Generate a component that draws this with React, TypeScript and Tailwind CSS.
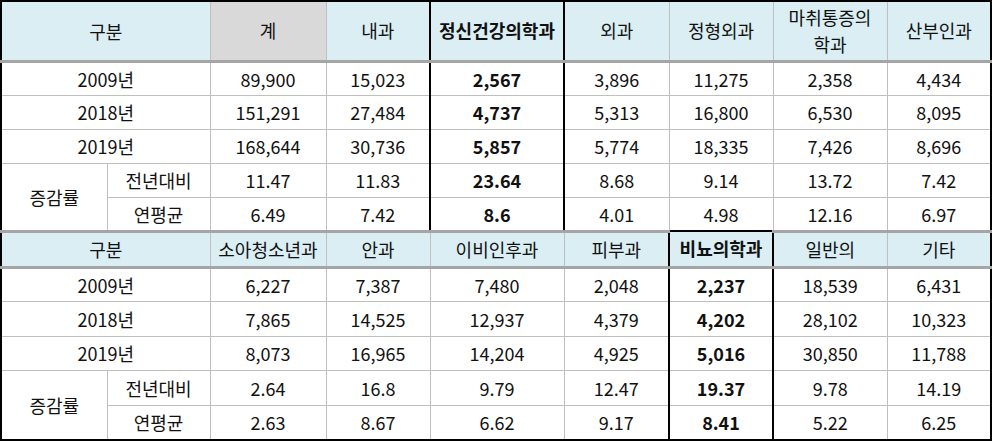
import React from "react";

const font = { fontFamily: '"Noto Sans CJK KR", "Noto Sans", sans-serif' };

type Cell = string;
const top1 = ["계", "내과", "정신건강의학과", "외과", "정형외과", "마취통증의\n학과", "산부인과"];
const rows1: Cell[][] = [
  ["89,900", "15,023", "2,567", "3,896", "11,275", "2,358", "4,434"],
  ["151,291", "27,484", "4,737", "5,313", "16,800", "6,530", "8,095"],
  ["168,644", "30,736", "5,857", "5,774", "18,335", "7,426", "8,696"],
  ["11.47", "11.83", "23.64", "8.68", "9.14", "13.72", "7.42"],
  ["6.49", "7.42", "8.6", "4.01", "4.98", "12.16", "6.97"],
];
const top2 = ["소아청소년과", "안과", "이비인후과", "피부과", "비뇨의학과", "일반의", "기타"];
const rows2: Cell[][] = [
  ["6,227", "7,387", "7,480", "2,048", "2,237", "18,539", "6,431"],
  ["7,865", "14,525", "12,937", "4,379", "4,202", "28,102", "10,323"],
  ["8,073", "16,965", "14,204", "4,925", "5,016", "30,850", "11,788"],
  ["2.64", "16.8", "9.79", "12.47", "19.37", "9.78", "14.19"],
  ["2.63", "8.67", "6.62", "9.17", "8.41", "5.22", "6.25"],
];

const grid = "border border-[#bfbfbf]";

function Block({
  header,
  rows,
  bold,
  grayFirst,
  headerH,
  rowH,
  first,
  last,
}: {
  header: string[];
  rows: Cell[][];
  bold: number;
  grayFirst: boolean;
  headerH: string;
  rowH: string;
  first: boolean;
  last: boolean;
}) {
  const labels = ["2009년", "2018년", "2019년"];
  const boldCell = (isLastRow: boolean) =>
    `border-x-2 border-x-black ${isLastRow ? "border-b-2 border-b-black" : ""}`;
  return (
    <>
      <tr className={headerH}>
        <td
          colSpan={2}
          className={`${grid} bg-[#daeef3] border-b-[3px] border-b-[#a5a5a5] ${first ? "border-t-2 border-t-black" : "border-t-[3px] border-t-[#a5a5a5]"} border-l-2 border-l-black`}
        >
          구분
        </td>
        {header.map((h, i) => (
          <td
            key={i}
            className={`${grid} border-b-[3px] border-b-[#a5a5a5] ${
              i === 0 && grayFirst ? "bg-[#d9d9d9]" : "bg-[#daeef3]"
            } ${i === bold ? "font-bold border-x-2 border-x-black border-t-2 border-t-black" : first ? "border-t-2 border-t-black" : "border-t-[3px] border-t-[#a5a5a5]"} ${
              i === 6 ? "border-r-2 border-r-black" : ""
            } whitespace-pre-line leading-[27px]`}
          >
            {h}
          </td>
        ))}
      </tr>
      {rows.map((r, ri) => {
        const isLastRow = ri === rows.length - 1;
        return (
          <tr key={ri} className={rowH}>
            {ri < 3 ? (
              <td colSpan={2} className={`${grid} border-l-2 border-l-black`}>
                {labels[ri]}
              </td>
            ) : ri === 3 ? (
              <>
                <td
                  rowSpan={2}
                  className={`${grid} border-l-2 border-l-black ${last ? "border-b-2 border-b-black" : ""}`}
                >
                  증감률
                </td>
                <td className={grid}>전년대비</td>
              </>
            ) : (
              <td className={`${grid} ${last ? "border-b-2 border-b-black" : ""}`}>연평균</td>
            )}
            {r.map((v, i) => (
              <td
                key={i}
                className={`${grid} ${i === bold ? "font-bold " + boldCell(isLastRow) : ""} ${
                  i === 6 ? "border-r-2 border-r-black" : ""
                } ${isLastRow && last ? "border-b-2 border-b-black" : ""}`}
              >
                {v}
              </td>
            ))}
          </tr>
        );
      })}
    </>
  );
}

export default function App() {
  return (
    <div className="w-[992px] h-[442px] bg-white overflow-hidden" style={font}>
      <table className="w-[990px] border-collapse table-fixed text-[18px] leading-[24px] text-center text-[#111]">
        <colgroup>
          <col className="w-[106px]" />
          <col className="w-[103px]" />
          <col className="w-[116px]" />
          <col className="w-[104px]" />
          <col className="w-[134px]" />
          <col className="w-[105px]" />
          <col className="w-[104px]" />
          <col className="w-[114px]" />
          <col className="w-[104px]" />
        </colgroup>
        <tbody>
          <Block header={top1} rows={rows1} bold={2} grayFirst headerH="h-[60px]" rowH="h-[34px]" first last={false} />
          <Block header={top2} rows={rows2} bold={4} grayFirst={false} headerH="h-[36px]" rowH="h-[34.6px]" first={false} last />
        </tbody>
      </table>
    </div>
  );
}
